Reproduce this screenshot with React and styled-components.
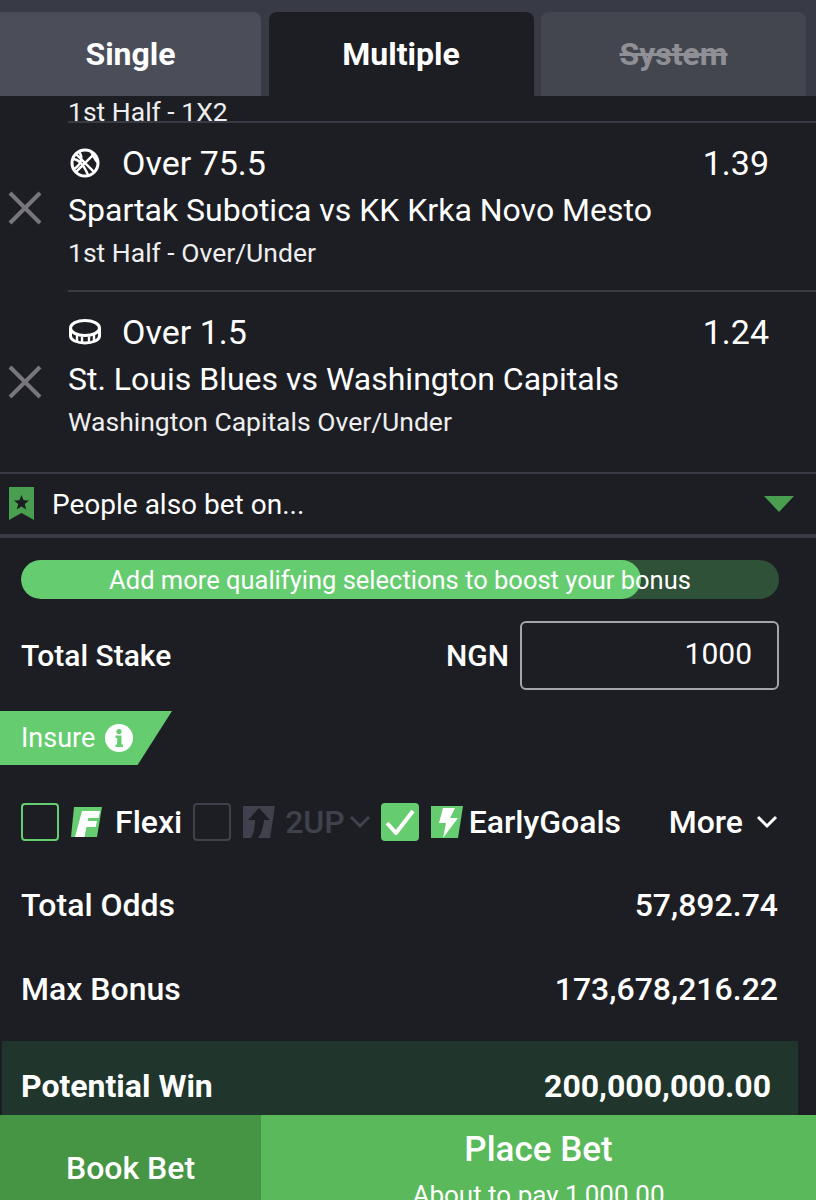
import styled, { createGlobalStyle } from "styled-components";

const GlobalStyle = createGlobalStyle`
  html, body {
    margin: 0;
    padding: 0;
    background: #1d1e23;
  }
  * {
    box-sizing: border-box;
  }
`;

const Page = styled.div`
  width: 816px;
  height: 1200px;
  overflow: hidden;
  display: flex;
  flex-direction: column;
  background: #1d1e23;
  color: #fff;
  font-family: Roboto, "Liberation Sans", sans-serif;
`;

const Tabs = styled.div`
  height: 96px;
  flex: none;
  padding: 12px 10px 0 0;
  display: grid;
  grid-template-columns: 261px 265px 265px;
  column-gap: 7.5px;
  background: #383b45;
`;

const Tab = styled.div`
  display: flex;
  align-items: center;
  justify-content: center;
  padding-bottom: 1px;
  border-radius: ${(p) => (p.$first ? "0 8px 0 0" : "8px 8px 0 0")};
  background: ${(p) => (p.$active ? "#1d1e23" : p.$disabled ? "#43464f" : "#4b4e59")};
  color: ${(p) => (p.$disabled ? "#8f9096" : "#fff")};
  font-size: 32px;
  font-weight: 700;
  text-decoration: ${(p) => (p.$disabled ? "line-through" : "none")};
`;

const BetList = styled.div`
  height: 376px;
  flex: none;
  overflow: hidden;
  display: flex;
  flex-direction: column;
  justify-content: flex-end;
`;

const BetRow = styled.div`
  display: flex;
  flex: none;
  align-items: center;
`;

const Remove = styled.div`
  width: 68px;
  flex: none;
  padding-left: 8px;
  display: flex;
  color: #77767c;
`;

const BetBody = styled.div`
  flex: 1;
  height: ${(p) => p.$height}px;
  padding-top: ${(p) => (p.$plain ? 0 : 19)}px;
  border-bottom: ${(p) => (p.$last ? "none" : "2px solid #383b45")};
`;

const PickLine = styled.div`
  display: flex;
  align-items: center;
  height: 42px;
  padding-right: 47px;
  font-size: 34px;
`;

const SportIcon = styled.svg`
  width: 34px;
  height: 34px;
  margin-right: 20px;
  flex: none;
`;

const Odds = styled.span`
  margin-left: auto;
`;

const MatchLine = styled.div`
  margin-top: 6px;
  font-size: 32px;
  line-height: 40px;
`;

const MarketLine = styled.div`
  margin-top: ${(p) => (p.$plain ? 0 : 6)}px;
  font-size: 26.5px;
  line-height: 34px;
  color: #eeeeef;
`;

const AlsoBet = styled.div`
  height: 66px;
  flex: none;
  display: flex;
  align-items: center;
  padding: 0 22px 0 9px;
  border-top: 2px solid #383b45;
  border-bottom: 4px solid #383b45;
  font-size: 28px;
`;

const AlsoLabel = styled.span`
  margin-left: 17px;
`;

const Caret = styled.div`
  margin-left: auto;
  width: 0;
  height: 0;
  border-left: 15px solid transparent;
  border-right: 15px solid transparent;
  border-top: 16px solid #4a9e4f;
`;

const Progress = styled.div`
  height: 39px;
  flex: none;
  margin: 22px 37px 0 21px;
  position: relative;
  display: flex;
  align-items: center;
  justify-content: center;
  border-radius: 20px;
  overflow: hidden;
  background: #2e5138;
  font-size: 25.5px;
`;

const ProgressFill = styled.div`
  position: absolute;
  left: 0;
  top: 0;
  bottom: 0;
  border-radius: 20px;
  background: #66cc70;
`;

const ProgressText = styled.span`
  position: relative;
`;

const StakeRow = styled.div`
  height: 69px;
  flex: none;
  margin: 22px 37px 0 21px;
  display: flex;
  align-items: center;
  font-size: 30px;
  font-weight: 500;
`;

const Currency = styled.span`
  margin-left: auto;
  margin-right: 11px;
`;

const StakeInput = styled.div`
  width: 259px;
  height: 69px;
  padding: 0 25px 5px 0;
  display: flex;
  align-items: center;
  justify-content: flex-end;
  border: 2px solid #a4a5aa;
  border-radius: 6px;
  font-size: 30px;
  font-weight: 400;
`;

const InsureTag = styled.div`
  width: 172px;
  height: 54px;
  flex: none;
  margin-top: 21px;
  padding-left: 21px;
  display: flex;
  align-items: center;
  gap: 10px;
  background: #66cc70;
  clip-path: polygon(0 0, 100% 0, 80% 100%, 0 100%);
  font-size: 27px;
`;

const OptionRow = styled.div`
  height: 38px;
  flex: none;
  margin: 38px 37px 0 21px;
  display: flex;
  align-items: center;
  font-size: 32px;
`;

const Check = styled.div`
  width: 38px;
  height: 38px;
  flex: none;
  display: flex;
  align-items: center;
  justify-content: center;
  border-radius: 4px;
  border: 2px solid ${(p) => (p.$on ? "#66cc70" : p.$muted ? "#3f424c" : "#66cc70")};
  background: ${(p) => (p.$on ? "#66cc70" : "transparent")};
`;

const OptionLogo = styled.svg`
  width: 32px;
  height: 34px;
  flex: none;
  margin-left: ${(p) => p.$gap}px;
`;

const OptionLabel = styled.span`
  margin-left: ${(p) => p.$gap}px;
  margin-right: ${(p) => p.$after || 0}px;
  color: ${(p) => (p.$muted ? "#3f424c" : "#fff")};
  font-weight: 500;
`;

const SmallChevron = styled.svg`
  width: 24px;
  height: 14px;
  flex: none;
  margin-left: ${(p) => p.$gap}px;
  margin-right: ${(p) => p.$after || 0}px;
`;

const MoreLabel = styled.span`
  margin-left: auto;
  font-weight: 500;
`;

const SummaryRow = styled.div`
  height: 84px;
  flex: none;
  padding: 0 38px 0 21px;
  display: flex;
  align-items: center;
  justify-content: space-between;
  font-size: 32px;
  font-weight: 500;
`;

const WinPanel = styled.div`
  height: 74px;
  flex: none;
  margin: 10px 18px 0 2px;
  padding: 16px 27px 0 19px;
  display: flex;
  align-items: center;
  justify-content: space-between;
  background: #20352b;
  font-size: 32px;
  font-weight: 700;
`;

const ActionBar = styled.div`
  height: 85px;
  flex: none;
  display: grid;
  grid-template-columns: 261px 1fr;
  overflow: hidden;
`;

const BookButton = styled.div`
  padding-top: 33px;
  text-align: center;
  background: #459545;
  font-size: 32px;
  font-weight: 500;
  line-height: 40px;
`;

const PlaceButton = styled.div`
  padding-top: 13px;
  text-align: center;
  background: #5ab95a;
  font-size: 35px;
  font-weight: 500;
  line-height: 44px;
`;

const PlaceNote = styled.div`
  margin-top: 6px;
  font-size: 26px;
  font-weight: 400;
  line-height: 34px;
`;

const CloseIcon = () => (
  <svg width="34" height="34" viewBox="0 0 34 34" fill="none" stroke="currentColor" strokeWidth="4">
    <path d="M2 2 L32 32 M32 2 L2 32" />
  </svg>
);

const BasketballIcon = () => (
  <SportIcon viewBox="0 0 34 34" fill="none" stroke="#fff" strokeWidth="3">
    <circle cx="17" cy="17" r="13" />
    <path strokeWidth="2.4" d="M7.8 7.8 L26.2 26.2 M26.2 7.8 L7.8 26.2 M11 5.5 C15 11 14 18 6 23 M23 5.5 C26 11 27 14 30 17 M4.5 13 C10 13 15 17 20 29" />
  </SportIcon>
);

const PuckIcon = () => (
  <SportIcon viewBox="0 0 34 34" fill="none" stroke="#fff" strokeWidth="3">
    <ellipse cx="17" cy="13" rx="14.5" ry="7.5" />
    <path d="M2.5 13 V21 C2.5 25 9 28 17 28 C25 28 31.5 25 31.5 21 V13" />
    <path strokeWidth="2.4" d="M9 20 V27 M14 21.5 V28 M21 21.5 V28 M26 20 V27" />
  </SportIcon>
);

const BookmarkIcon = () => (
  <svg width="26" height="34" viewBox="0 0 26 34">
    <path fill="#4a9e4f" d="M0 0 H25 V33 L12.5 26 L0 33 Z" />
    <path fill="#1d1e23" d="M12.5 8 L14.6 13.2 L20 13.6 L15.8 17 L17.2 22.4 L12.5 19.4 L7.8 22.4 L9.2 17 L5 13.6 L10.4 13.2 Z" />
  </svg>
);

const InfoIcon = () => (
  <svg width="28" height="28" viewBox="0 0 28 28">
    <circle cx="14" cy="14" r="14" fill="#fff" />
    <circle cx="14" cy="7.5" r="2.6" fill="#66cc70" />
    <path fill="#66cc70" d="M10.5 11.5 H16.5 V20.5 H18 V23 H10.5 V20.5 H12.2 V14 H10.5 Z" />
  </svg>
);

const FlexiLogo = () => (
  <OptionLogo $gap={12} viewBox="0 0 32 34">
    <path fill="#66cc70" d="M3 2 H31 L26 32 H0 Z" />
    <path fill="#fff" d="M11 6 H29 L27.6 13 H17.4 L16.6 16 H26 L24.8 22 H15.4 L13.6 32 H4 Z" />
  </OptionLogo>
);

const TwoUpLogo = () => (
  <OptionLogo $gap={12} viewBox="0 0 32 34">
    <path fill="#3f424c" d="M0 1 H32 L27 33 H0 Z" />
    <path fill="#1d1e23" d="M16 3 L27 15 H21 C20 23 18 29 15 33 H8 C11 28 12 22 12 15 H5 Z" />
  </OptionLogo>
);

const EarlyLogo = () => (
  <OptionLogo $gap={12} viewBox="0 0 32 34">
    <path fill="#66cc70" d="M0 1 H32 L27 33 H0 Z" />
    <path fill="#fff" d="M12 3 H24 L19 13 H27 L12 33 L15 18 H8 Z" />
  </OptionLogo>
);

const Chevron = ({ color, gap, after }) => (
  <SmallChevron $gap={gap} $after={after} viewBox="0 0 24 14" fill="none" stroke={color} strokeWidth="3">
    <path d="M3 2 L12 11 L21 2" />
  </SmallChevron>
);

const bets = [
  { id: 1, pick: "Over 75.5", odds: "1.39", match: "Spartak Subotica vs KK Krka Novo Mesto", market: "1st Half - Over/Under", Icon: BasketballIcon },
  { id: 2, pick: "Over 1.5", odds: "1.24", match: "St. Louis Blues vs Washington Capitals", market: "Washington Capitals Over/Under", Icon: PuckIcon, last: true },
];

const App = () => {
  return (
    <Page>
      <GlobalStyle />
      <Tabs>
        <Tab $first>Single</Tab>
        <Tab $active>Multiple</Tab>
        <Tab $disabled>System</Tab>
      </Tabs>
      <BetList>
        <BetRow>
          <Remove />
          <BetBody $plain $height={28}>
            <MarketLine $plain>1st Half - 1X2</MarketLine>
          </BetBody>
        </BetRow>
        {bets.map((bet) => (
          <BetRow key={bet.id}>
            <Remove>
              <CloseIcon />
            </Remove>
            <BetBody $height={bet.last ? 180 : 169} $last={bet.last}>
              <PickLine>
                <bet.Icon />
                {bet.pick}
                <Odds>{bet.odds}</Odds>
              </PickLine>
              <MatchLine>{bet.match}</MatchLine>
              <MarketLine>{bet.market}</MarketLine>
            </BetBody>
          </BetRow>
        ))}
      </BetList>
      <AlsoBet>
        <BookmarkIcon />
        <AlsoLabel>People also bet on...</AlsoLabel>
        <Caret />
      </AlsoBet>
      <Progress>
        <ProgressFill style={{ width: `${(620 / 758) * 100}%` }} />
        <ProgressText>Add more qualifying selections to boost your bonus</ProgressText>
      </Progress>
      <StakeRow>
        Total Stake
        <Currency>NGN</Currency>
        <StakeInput>1000</StakeInput>
      </StakeRow>
      <InsureTag>
        Insure
        <InfoIcon />
      </InsureTag>
      <OptionRow>
        <Check />
        <FlexiLogo />
        <OptionLabel $gap={12} $after={11}>Flexi</OptionLabel>
        <Check $muted />
        <TwoUpLogo />
        <OptionLabel $gap={10} $muted>2UP</OptionLabel>
        <Chevron color="#3f424c" gap={3} after={9} />
        <Check $on>
          <svg width="30" height="26" viewBox="0 0 30 26" fill="none" stroke="#fff" strokeWidth="4">
            <path d="M2 14 L11 24 L28 2" />
          </svg>
        </Check>
        <EarlyLogo />
        <OptionLabel $gap={6}>EarlyGoals</OptionLabel>
        <MoreLabel>More</MoreLabel>
        <Chevron color="#fff" gap={12} />
      </OptionRow>
      <SummaryRow style={{ marginTop: 22 }}>
        <span>Total Odds</span>
        <span>57,892.74</span>
      </SummaryRow>
      <SummaryRow>
        <span>Max Bonus</span>
        <span>173,678,216.22</span>
      </SummaryRow>
      <WinPanel>
        <span>Potential Win</span>
        <span>200,000,000.00</span>
      </WinPanel>
      <ActionBar>
        <BookButton>Book Bet</BookButton>
        <PlaceButton>
          Place Bet
          <PlaceNote>About to pay 1,000.00</PlaceNote>
        </PlaceButton>
      </ActionBar>
    </Page>
  );
};

export default App;
